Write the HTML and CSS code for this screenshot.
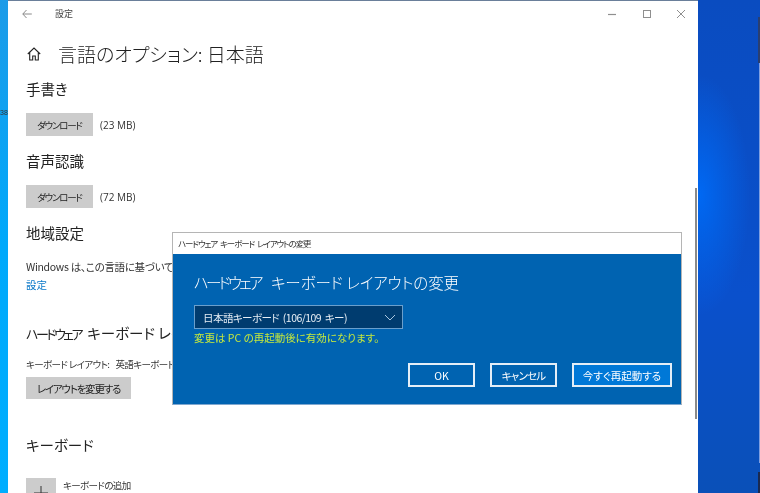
FILE: index.html
```html
<!DOCTYPE html>
<html lang="ja">
<head>
<meta charset="utf-8">
<title>設定</title>
<link rel="stylesheet" href="styles.css">
</head>
<body>
<div class="desktop">
  <span class="stray">38</span>
  <span class="edge-dark"></span>
  <span class="edge-light"></span>
  <span class="edge-bottom"></span>
  <div class="window">
    <header class="titlebar">
      <svg class="back" width="10" height="10" viewBox="0 0 10 10"><path d="M4.500 1 .8 5l3.700 4M.8 5h9" fill="none" stroke="#8a8a8a" stroke-width="1"/></svg>
      <span class="app-name">設定</span>
      <div class="controls">
        <svg width="10" height="10" viewBox="0 0 10 10"><path d="M1 5.500h8" stroke="#8f8f8f" stroke-width="1.200"/></svg>
        <svg width="10" height="10" viewBox="0 0 10 10"><rect x="1.500" y="1.500" width="7" height="7" fill="none" stroke="#8f8f8f"/></svg>
        <svg width="10" height="10" viewBox="0 0 10 10"><path d="M1 1l8 8M9 1 1 9" stroke="#8f8f8f" stroke-width="1"/></svg>
      </div>
    </header>
    <main class="content">
      <div class="page-title">
        <svg class="home" width="14" height="14" viewBox="0 0 14 14"><path d="M.8 7 7 1l6.200 6M2.700 5.600v7.400h3V9h2.600v4h3V5.600" fill="none" stroke="#222" stroke-width="1.100"/></svg>
        <h1>言語のオプション: 日本語</h1>
      </div>
      <section class="sec-hand">
        <h2>手書き</h2>
        <div class="row"><button class="btn btn-dl">ダウンロード</button><span class="size">(23 MB)</span></div>
      </section>
      <section class="sec-voice">
        <h2>音声認識</h2>
        <div class="row"><button class="btn btn-dl">ダウンロード</button><span class="size">(72 MB)</span></div>
      </section>
      <section class="sec-region">
        <h2>地域設定</h2>
        <p class="desc">Windows は、この言語に基づいて日</p>
        <a class="link">設定</a>
      </section>
      <section class="sec-hw">
        <h2><span class="tight">ハードウェア</span> キーボード レイ</h2>
        <p class="small small-layout">キーボード レイアウト:&nbsp;&nbsp;&nbsp; 英語キーボード</p>
        <button class="btn btn-layout">レイアウトを変更する</button>
      </section>
      <section class="sec-kb">
        <h2>キーボード</h2>
        <div class="add-row">
          <button class="btn btn-add"><svg width="14" height="14" viewBox="0 0 14 14"><path d="M7 0v14M0 7h14" stroke="#333" stroke-width="1"/></svg></button>
          <span class="small">キーボードの追加</span>
        </div>
      </section>
    </main>
    <div class="scrollbar"></div>
  </div>
  <div class="dialog">
    <div class="dlg-title">ハードウェア キーボード レイアウトの変更</div>
    <div class="dlg-body">
      <h3><span class="tight-h3">ハードウェア</span> キーボード レイアウトの変更</h3>
      <div class="select">
        <span>日本語キーボード (106/109 キー)</span>
        <svg width="12" height="7" viewBox="0 0 12 7"><path d="M1 1l5 5 5-5" fill="none" stroke="#a9c6df" stroke-width="1"/></svg>
      </div>
      <p class="notice">変更は PC の再起動後に有効になります。</p>
      <div class="actions">
        <button class="dlg-btn btn-ok">OK</button>
        <button class="dlg-btn btn-ok btn-cancel">キャンセル</button>
        <button class="dlg-btn btn-now">今すぐ再起動する</button>
      </div>
    </div>
  </div>
</div>
</body>
</html>
```
FILE: styles.css
```css
* { box-sizing: border-box; }
html, body { margin: 0; padding: 0; }
body { font-family: "Noto Sans CJK JP", "Open Sans", sans-serif; font-feature-settings: "palt"; }
.desktop {
  position: relative;
  width: 760px;
  height: 493px;
  overflow: hidden;
  filter: blur(0.35px);
  background:
    radial-gradient(ellipse 50px 120px at 700px 195px, #0068f2 0%, rgba(0,104,242,0) 100%),
    linear-gradient(180deg, #0a4cc0 0%, #0a50cc 60%, #0a50b8 100%);
}
.desktop::before {
  content: "";
  position: absolute;
  left: 0; top: 0; bottom: 0;
  width: 8px;
  background: linear-gradient(180deg, #1c9be8 0%, #00a9fb 50%, #00aeff 100%);
}
.stray {
  position: absolute;
  left: 0; top: 107px;
  font: 7px/12px "Liberation Sans", sans-serif;
  color: #333;
  z-index: 1;
}
.edge-dark { position: absolute; left: 758px; top: 17px; width: 2px; height: 46px; background: #2a3f70; }
.edge-light { position: absolute; left: 759px; top: 63px; width: 1px; height: 400px; background: #7f9fe0; }
.edge-bottom { position: absolute; left: 758px; top: 472px; width: 2px; height: 21px; background: #1a2a50; }
.window {
  position: absolute;
  left: 8px; top: 0;
  width: 690px;
  height: 493px;
  background: #fff;
  border-top: 1px solid #6a7f9a;
  overflow: hidden;
}
.titlebar {
  display: flex;
  align-items: center;
  height: 25px;
  padding-left: 14px;
  color: #444;
}
.back { flex: none; }
.app-name { margin-left: 23px; font-size: 9px; }
.controls {
  margin-left: auto;
  width: 91px;
  padding-right: 12px;
  display: flex;
  justify-content: space-between;
}
.content { padding: 12px 0 0 18px; color: #1a1a1a; }
.page-title { display: flex; align-items: center; height: 32px; }
.home { margin-left: 1px; flex: none; }
h1 { margin: 0 0 0 17px; font-size: 19px; font-weight: 300; line-height: 32px; color: #222; }
h2 { margin: 0; font-size: 14.500px; font-weight: 400; line-height: 20px; color: #222; white-space: nowrap; }
.tight { font-size: 13px; letter-spacing: -2.500px; margin-right: 3px; }
.sec-hand { margin-top: 9px; }
.row { display: flex; align-items: center; margin-top: 14px; }
.btn {
  border: 0; padding: 0; margin: 0;
  background: #cccccc;
  color: #222;
  font: 400 10px "Noto Sans CJK JP", sans-serif;
  font-feature-settings: "palt";
  display: flex; align-items: center; justify-content: center;
}
.btn-dl { width: 67px; height: 23px; font-size: 9.500px; letter-spacing: -1.200px; }
.size { margin-left: 7px; font: 10px "Open Sans", sans-serif; color: #333; }
.sec-voice { margin-top: 15px; }
.sec-region { margin-top: 15px; }
.desc { margin: 16px 0 0; font-size: 10.500px; line-height: 16px; color: #333; white-space: nowrap; letter-spacing: -0.300px; }
.link { display: block; margin-top: 2px; font-size: 10.500px; line-height: 16px; color: #0a78c8; }
.sec-hw { margin-top: 30px; }
.small { margin: 0; font-size: 9.500px; line-height: 14px; color: #333; white-space: nowrap; letter-spacing: -0.600px; }
.small-layout { margin-top: 13px; }
.btn-layout { width: 105px; height: 22px; margin-top: 6px; font-size: 10.500px; letter-spacing: -1.200px; }
.sec-kb { margin-top: 36px; }
.add-row { display: flex; margin-top: 23px; }
.btn-add { width: 30px; height: 30px; flex: none; }
.add-row .small { margin: 0 0 0 7px; }
.scrollbar {
  position: absolute;
  left: 687px; top: 187px;
  width: 2px; height: 231px;
  background: #8a8a8a;
}
.dialog {
  position: absolute;
  left: 172px; top: 232px;
  width: 510px;
  height: 173px;
  display: flex;
  flex-direction: column;
  border: 1px solid #b5b5b5;
  border-bottom-color: #7fa7cf;
  background: #0063b1;
}
.dlg-title {
  height: 21px;
  background: #fff;
  padding-left: 5px;
  font-size: 8.500px;
  letter-spacing: -1.100px;
  word-spacing: 2px;
  line-height: 21px;
  color: #333;
}
.dlg-body { flex: 1; padding: 16px 9px 0 21px; color: #fff; }
h3 { margin: 0; font-size: 15.500px; letter-spacing: -0.100px; font-weight: 300; line-height: 24px; }
.tight-h3 { letter-spacing: -2.800px; margin-right: 7px; }
.select {
  display: flex;
  align-items: center;
  justify-content: space-between;
  width: 209px; height: 24px;
  margin-top: 11px;
  padding: 0 6px 0 8px;
  background: #003c6f;
  border: 1px solid #6a9fcc;
  font-size: 10.500px;
  letter-spacing: -0.550px;
  word-spacing: 2px;
  color: #e6eef5;
}
.notice { margin: 1px 0 0; font-size: 10.500px; line-height: 16px; color: #c5e83c; }
.actions { display: flex; justify-content: flex-end; gap: 15px; margin-top: 17px; }
.dlg-btn {
  height: 24px;
  border: 2px solid #e4eef7;
  color: #fff;
  padding: 0;
  font: 400 10.500px "Noto Sans CJK JP", sans-serif;
  font-feature-settings: "palt";
}
.btn-ok { width: 67px; background: #0063b1; }
.btn-cancel { letter-spacing: -0.800px; }
.btn-now { width: 100px; background: #0078d7; }
```
